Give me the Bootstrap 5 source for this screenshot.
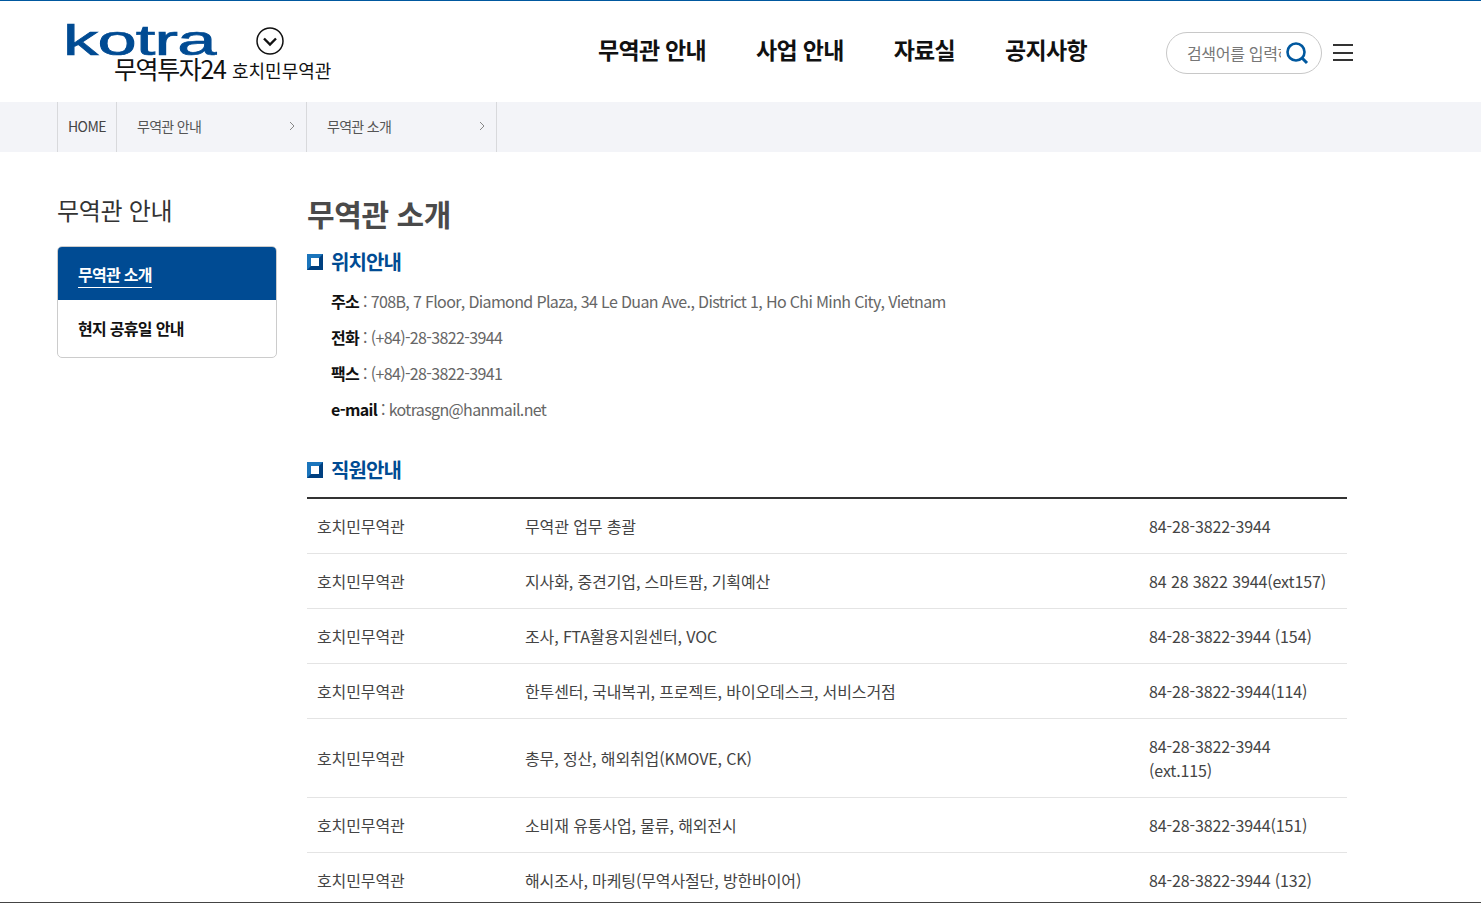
<!DOCTYPE html>
<html lang="ko">
<head>
    <meta charset="UTF-8">
    <title>무역관 소개</title>
    <link href="https://cdn.jsdelivr.net/npm/bootstrap@5.3.2/dist/css/bootstrap.min.css" rel="stylesheet"/>
    <style>
        html { height: 903px; overflow: hidden; }
        body {
            height: 903px;
            overflow: hidden;
            border-bottom: 1px solid #444;
            font-family: "Noto Sans CJK KR", "Noto Sans", sans-serif;
            color: #444;
            font-size: 16px;
            letter-spacing: -0.5px;
        }
        .top-head {
            height: 102px;
            border-top: 1px solid #00589f;
            padding-left: 57px;
        }
        .logo-box { width: 291px; height: 101px; position: relative; flex: none; }
        .logo-svg { display: block; position: absolute; left: 0; top: 0; }
        .main-menu { margin-left: 250px; gap: 50px; height: 100px; padding-bottom: 4px; flex: none; }
        .main-menu a {
            font-size: 23px; font-weight: 700; color: #111; text-decoration: none; letter-spacing: -0.7px;
        }
        .search-pill {
            width: 156px; height: 42px; margin-left: 79px; margin-top: 2px; flex: none;
            border: 1px solid #c8c8c8; border-radius: 21px; padding-left: 20px;
        }
        .search-pill input {
            width: 94px; border: 0; outline: 0; padding: 0; font-size: 16px; background: none; letter-spacing: -0.3px;
            margin-right: 4px; flex: none;
        }
        .search-pill input::placeholder { color: #777; opacity: 1; }
        .burger { width: 20px; margin-left: 11px; margin-top: 2px; gap: 5.5px; flex: none; }
        .burger span { display: block; height: 2px; background: #333; }
        .crumb-bar { height: 50px; background: #f3f4f8; padding-left: 57px; }
        .crumb-item {
            height: 50px; padding-bottom: 2px; border-right: 1px solid #d8d9dc; font-size: 14px; color: #555; letter-spacing: -0.7px;
        }
        .crumb-home { width: 60px; border-left: 1px solid #d8d9dc; padding-left: 10px; color: #444; letter-spacing: -0.6px; }
        .crumb-sel { width: 190px; padding-left: 20px; padding-right: 11px; }
        .page-wrap { width: 1290px; margin-left: 57px; gap: 30px; padding-top: 39px; }
        .side-col { width: 220px; flex: none; }
        .side-title { font-size: 24px; font-weight: 400; color: #333; line-height: 38px; margin: 0 0 17px; letter-spacing: -0.3px; }
        .side-menu { border: 1px solid #ccc; border-radius: 5px; overflow: hidden; }
        .side-menu a {
            display: block; height: 53px; line-height: 55px; padding-left: 20px; font-size: 16px; font-weight: 700;
            color: #111; text-decoration: none; letter-spacing: -0.7px;
        }
        .side-menu a.on { background: #004b93; color: #fff; }
        .side-menu a.on span { border-bottom: 1px solid #fff; padding-bottom: 1px; }
        .side-menu a + a { height: 57px; line-height: 56px; }
        .body-col { flex: 1; }
        .page-title { font-size: 30px; font-weight: 700; color: #4a4a4a; line-height: 44px; margin: 0 0 11px; letter-spacing: -0.4px; }
        .sec-title {
            font-size: 20px; font-weight: 700; color: #004b93; line-height: 32px; margin: 0; gap: 8px; letter-spacing: -0.9px;
        }
        .sec-staff { margin-top: 27px; margin-bottom: 11px; }
        .sq-mark {
            width: 16px; height: 16px; flex: none; border: 4px solid #004080;
            border-top-color: #1b75bc; border-left-color: #1b75bc; background: #fff;
        }
        .info-list { margin: 0; padding: 5px 0 0 24px; list-style: none; }
        .info-list li { height: 36px; line-height: 36px; font-size: 16px; color: #666; letter-spacing: -0.64px; }
        .info-list b { color: #111; font-weight: 700; }
        .staff-table { margin: 0; border-top: 2px solid #333; font-size: 16px; color: #444; letter-spacing: -0.12px; }
        .staff-table td {
            padding: 15px 10px; line-height: 24px; vertical-align: middle; border-bottom: 1px solid #e4e4e4; color: #444;
        }
        .staff-table td:nth-child(1) { width: 208px; }
        .staff-table td:nth-child(3) { width: 208px; }
    </style>
</head>
<body>
    <header class="top-head d-flex align-items-center">
        <div class="logo-box">
            <svg class="logo-svg" width="291" height="101" viewBox="0 0 291 101">
                <text transform="translate(6 54) scale(1.68 1)" font-family="Liberation Sans" font-size="42" font-weight="400" fill="#004b93" stroke="#004b93" stroke-width="0.7">kotra</text>
                <circle cx="213" cy="40" r="13" fill="#fff" stroke="#111" stroke-width="1.5"/>
                <path d="M207 37.5l6 6 6-6" fill="none" stroke="#111" stroke-width="2.4"/>
                <text x="57" y="78" font-family="Noto Sans CJK KR" font-size="25" font-weight="400" fill="#111" letter-spacing="-1.4">무역투자24</text>
                <text x="175" y="77" font-family="Noto Sans CJK KR" font-size="18" font-weight="400" fill="#111" letter-spacing="0">호치민무역관</text>
            </svg>
        </div>
        <nav class="main-menu d-flex align-items-center">
            <a href="#">무역관 안내</a>
            <a href="#">사업 안내</a>
            <a href="#">자료실</a>
            <a href="#">공지사항</a>
        </nav>
        <div class="search-pill d-flex align-items-center">
            <input type="text" placeholder="검색어를 입력하세요">
            <svg width="24" height="24" viewBox="0 0 24 24" class="flex-none">
                <circle cx="11" cy="11" r="8.5" fill="none" stroke="#00589f" stroke-width="2.6"/>
                <path d="M17 17l5 5" stroke="#00589f" stroke-width="3" fill="none"/>
            </svg>
        </div>
        <div class="burger d-flex flex-column">
            <span></span><span></span><span></span>
        </div>
    </header>

    <div class="crumb-bar d-flex">
        <div class="crumb-item crumb-home d-flex align-items-center">HOME</div>
        <div class="crumb-item crumb-sel d-flex align-items-center justify-content-between">
            <span>무역관 안내</span>
            <svg width="6" height="10" viewBox="0 0 6 10"><path d="M1 1l4 4-4 4" fill="none" stroke="#888"/></svg>
        </div>
        <div class="crumb-item crumb-sel d-flex align-items-center justify-content-between">
            <span>무역관 소개</span>
            <svg width="6" height="10" viewBox="0 0 6 10"><path d="M1 1l4 4-4 4" fill="none" stroke="#888"/></svg>
        </div>
    </div>

    <main class="page-wrap d-flex">
        <aside class="side-col">
            <h2 class="side-title">무역관 안내</h2>
            <div class="side-menu">
                <a href="#" class="on"><span>무역관 소개</span></a>
                <a href="#">현지 공휴일 안내</a>
            </div>
        </aside>
        <section class="body-col">
            <h1 class="page-title">무역관 소개</h1>
            <h3 class="sec-title d-flex align-items-center"><i class="sq-mark"></i>위치안내</h3>
            <ul class="info-list">
                <li><b>주소</b> : 708B, 7 Floor, Diamond Plaza, 34 Le Duan Ave., District 1, Ho Chi Minh City, Vietnam</li>
                <li><b>전화</b> : (+84)-28-3822-3944</li>
                <li><b>팩스</b> : (+84)-28-3822-3941</li>
                <li><b>e-mail</b> : kotrasgn@hanmail.net</li>
            </ul>
            <h3 class="sec-title sec-staff d-flex align-items-center"><i class="sq-mark"></i>직원안내</h3>
            <table class="table staff-table">
                <tbody id="staffRows"></tbody>
            </table>
        </section>
    </main>

    <script src="https://cdn.jsdelivr.net/npm/bootstrap@5.3.2/dist/js/bootstrap.bundle.min.js"></script>
    <script>
        const staff = [
            ['무역관 업무 총괄', '84-28-3822-3944'],
            ['지사화, 중견기업, 스마트팜, 기획예산', '84 28 3822 3944(ext157)'],
            ['조사, FTA활용지원센터, VOC', '84-28-3822-3944 (154)'],
            ['한투센터, 국내복귀, 프로젝트, 바이오데스크, 서비스거점', '84-28-3822-3944(114)'],
            ['총무, 정산, 해외취업(KMOVE, CK)', '84-28-3822-3944<br>(ext.115)'],
            ['소비재 유통사업, 물류, 해외전시', '84-28-3822-3944(151)'],
            ['해시조사, 마케팅(무역사절단, 방한바이어)', '84-28-3822-3944 (132)']
        ];
        var rows = '';
        staff.forEach(row => {
            rows += `<tr><td>호치민무역관</td><td>${row[0]}</td><td>${row[1]}</td></tr>`;
        });
        document.getElementById('staffRows').innerHTML = rows;
    </script>
</body>
</html>
